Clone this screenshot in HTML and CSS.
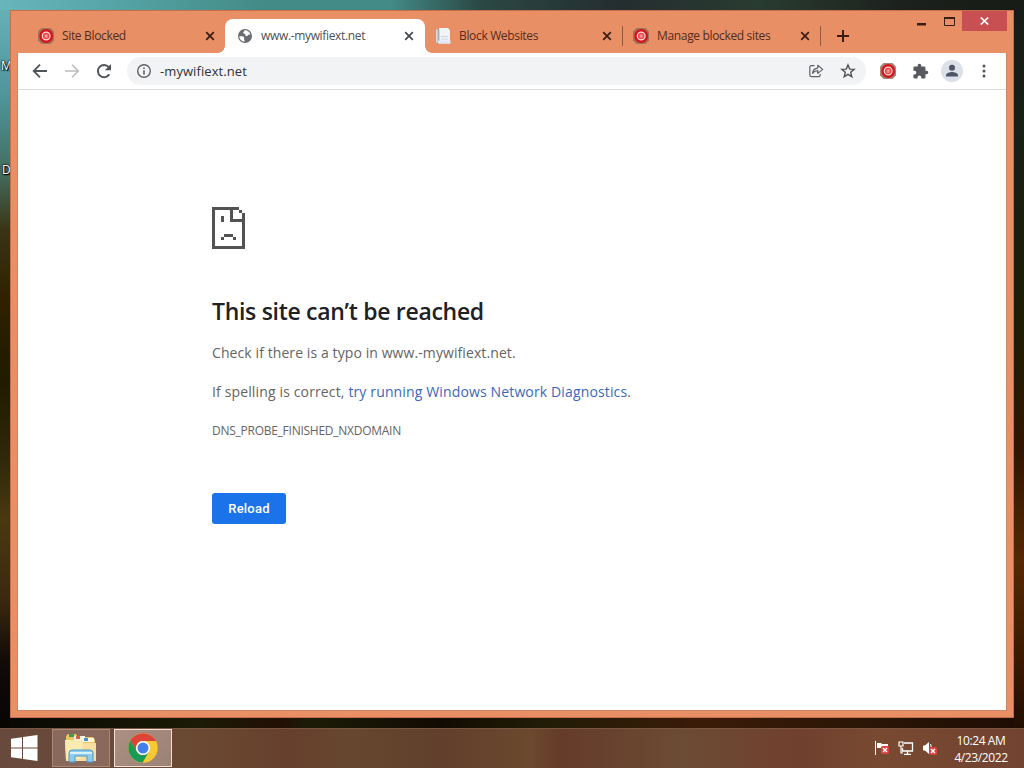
FILE: index.html
```html
<!DOCTYPE html>
<html lang="en">
<head>
    <meta charset="UTF-8">
    <meta name="viewport" content="width=device-width, initial-scale=1.0">
    <title>www.-mywifiext.net</title>
    <link rel="stylesheet" href="styles.css">
</head>
<body>
    <!-- Shared icons -->
    <svg class="defs" width="0" height="0">
        <symbol id="blocker" viewBox="0 0 16 16">
            <path d="M3.500 0h9L16 3.500v9L12.500 16h-9L0 12.500v-9z" fill="#8d6a58" opacity=".8"/>
            <circle cx="8.200" cy="8" r="6.900" fill="#d3151b"/>
            <circle cx="8.200" cy="8" r="3.900" fill="#e8484a" stroke="#ffdcd8" stroke-width="1.200"/>
            <path d="M6.700 7.200h3M6.700 9h3" stroke="#ffc9c4" stroke-width="1"/>
        </symbol>
        <symbol id="close" viewBox="0 0 10 10">
            <path d="M1.200 1.200l7.600 7.600M8.800 1.200L1.200 8.800" stroke="currentColor" stroke-width="1.700"/>
        </symbol>
        <symbol id="cross" viewBox="0 0 8 8">
            <rect width="8" height="8" rx="1.500" fill="#d8423f"/>
            <path d="M2 2l4 4M6 2L2 6" stroke="#fff" stroke-width="1.400"/>
        </symbol>
    </svg>

    <div class="desktop">
        <span class="desktop-label first">M</span>
        <span class="desktop-label second">D</span>

        <div class="window">
            <div class="tab-strip">
                <div class="tab">
                    <svg class="favicon"><use href="#blocker"/></svg>
                    <span class="tab-title">Site Blocked</span>
                    <svg class="tab-close"><use href="#close"/></svg>
                </div>
                <div class="tab active">
                    <svg class="favicon" viewBox="0 0 16 16">
                        <circle cx="8" cy="8" r="7" fill="#696d71"/>
                        <path d="M2.300 8.200c2 .1 3.700-.2 4.600.8.800.9-.5 1.500.3 2.400.5.500.6 1.200.3 2.200C4.600 13.300 2.300 11 2.300 8.200zM7.500 2.300c2.400-.2 5 1.300 5.900 4-.8.600-1.600.2-2.200.8-.7.600-1.300 1.700-2.400 1-.8-.6 0-1.500-.8-2.200-.6-.4-1.700.1-1.900-.8-.2-1 1.300-1.400 1.400-2.800z" fill="#fff"/>
                    </svg>
                    <span class="tab-title">www.-mywifiext.net</span>
                    <svg class="tab-close"><use href="#close"/></svg>
                </div>
                <div class="tab">
                    <svg class="favicon" viewBox="0 0 16 16">
                        <path d="M0 1.500h3.500v13H0z" fill="#7facc4"/>
                        <path d="M1 1.500h.8v13H1zM2.500 1.500h.6v13h-.6z" fill="#e4eef3"/>
                        <path d="M4 0h9l2 2.500v13H4z" fill="#f1f5fa"/>
                        <path d="M4 3l1-3v15.500H4zM6 8h7v1H6zM6 10.500h7v1H6z" fill="#c5d7e7"/>
                        <path d="M3 12.500h12.500v3H3z" fill="#dfe9f3"/>
                    </svg>
                    <span class="tab-title">Block Websites</span>
                    <svg class="tab-close"><use href="#close"/></svg>
                </div>
                <div class="tab divided">
                    <svg class="favicon"><use href="#blocker"/></svg>
                    <span class="tab-title">Manage blocked sites</span>
                    <svg class="tab-close"><use href="#close"/></svg>
                </div>
                <div class="new-tab">
                    <svg width="12" height="12" viewBox="0 0 12 12"><path d="M6 0v12M0 6h12" stroke="#3a1c10" stroke-width="2"/></svg>
                </div>
                <div class="window-buttons">
                    <svg class="minimize" width="9" height="3"><path d="M0 0h9v2.500H0z" fill="#3a1c10"/></svg>
                    <svg class="maximize" width="11" height="9"><path d="M.5 1h10v7.500H.5z" fill="none" stroke="#3a1c10"/><path d="M0 0h11v2H0z" fill="#3a1c10"/></svg>
                    <div class="window-close">
                        <svg width="9" height="8" viewBox="0 0 9 8"><path d="M.8.500l7.400 7M8.200.500l-7.400 7" stroke="#fff" stroke-width="1.700"/></svg>
                    </div>
                </div>
            </div>

            <div class="browser">
                <div class="toolbar">
                    <div class="tool"><svg width="16" height="16" viewBox="0 0 16 16"><path d="M15 8H2.200M8 1.700L1.700 8 8 14.300" fill="none" stroke="#505357" stroke-width="1.800"/></svg></div>
                    <div class="tool"><svg width="16" height="16" viewBox="0 0 16 16"><path d="M1 8h12.800M8 1.700L14.300 8 8 14.300" fill="none" stroke="#bbbdbf" stroke-width="1.600"/></svg></div>
                    <div class="tool"><svg width="16" height="16" viewBox="0 0 16 16"><path d="M13.300 11.200A6.100 6.100 0 1 1 12.700 4.200" fill="none" stroke="#505357" stroke-width="1.900"/><path d="M15 1v6.200H8.800z" fill="#505357"/></svg></div>
                    <div class="omnibox">
                        <svg class="info" width="16" height="16" viewBox="0 0 16 16"><circle cx="8" cy="8" r="6.300" fill="none" stroke="#5f6368" stroke-width="1.400"/><path d="M8 7.200v4.200M8 4.400v1.600" stroke="#5f6368" stroke-width="1.600"/></svg>
                        <span class="url">-mywifiext.net</span>
                        <div class="tool share"><svg width="16" height="16" viewBox="0 0 16 16"><path d="M6.500 2.700H3.400a1.600 1.600 0 0 0-1.600 1.600v7.800a1.600 1.600 0 0 0 1.600 1.600h7.200a1.600 1.600 0 0 0 1.600-1.600V11" fill="none" stroke="#5f6368" stroke-width="1.200"/><path d="M4.500 10.300c.4-3.200 2-5 5.300-5.200V2.300L14.700 6.400 9.800 10.400V7.700c-2.300 0-3.900.8-5.300 2.600z" fill="none" stroke="#5f6368" stroke-width="1.200" stroke-linejoin="round"/></svg></div>
                        <div class="tool"><svg width="16" height="16" viewBox="0 0 16 16"><path d="M8 1.900l1.700 4.200 4.500.3-3.500 2.900 1.100 4.400L8 11.300l-3.800 2.400 1.100-4.400L1.800 6.400l4.500-.3z" fill="none" stroke="#505357" stroke-width="1.400"/></svg></div>
                    </div>
                    <div class="tool extension"><svg width="16" height="16"><use href="#blocker"/></svg></div>
                    <div class="tool"><svg width="17" height="17" viewBox="0 0 24 24"><path d="M20.500 11H19V7a2 2 0 0 0-2-2h-4V3.500a2.500 2.500 0 0 0-5 0V5H4a2 2 0 0 0-2 2v3.800h1.500a2.700 2.700 0 0 1 0 5.400H2V20a2 2 0 0 0 2 2h3.800v-1.500a2.700 2.700 0 0 1 5.400 0V22H17a2 2 0 0 0 2-2v-4h1.500a2.500 2.500 0 0 0 0-5z" fill="#56595d"/></svg></div>
                    <div class="tool"><svg width="22" height="22" viewBox="0 0 22 22"><circle cx="11" cy="11" r="11" fill="#dce0e8"/><circle cx="11" cy="7.700" r="3" fill="#4d5566"/><path d="M5 16.500v-1.300C5 13 9 12 11 12s6 1 6 3.200v1.300z" fill="#4d5566"/></svg></div>
                    <div class="tool"><svg width="4" height="14" viewBox="0 0 4 14"><circle cx="2" cy="2" r="1.500" fill="#505357"/><circle cx="2" cy="7" r="1.500" fill="#505357"/><circle cx="2" cy="12" r="1.500" fill="#505357"/></svg></div>
                </div>

                <div class="page">
                    <svg class="sad-page" viewBox="0 0 11 14" shape-rendering="crispEdges">
                        <path d="M0 0h9v1h1v1h1v12H0zM1 1v12h9V5H6V1zM7 1v3h3V2H9V1zM3 3h1v2H3zM4 9h3v1H4zM3 10h1v1H3zM7 10h1v1H7z" fill="#535353" fill-rule="evenodd"/>
                    </svg>
                    <h1>This site can’t be reached</h1>
                    <p class="typo">Check if there is a typo in www.-mywifiext.net.</p>
                    <p class="suggestion">If spelling is correct, <a>try running Windows Network Diagnostics</a>.</p>
                    <p class="error-code">DNS_PROBE_FINISHED_NXDOMAIN</p>
                    <button type="button">Reload</button>
                </div>
            </div>
        </div>

        <div class="taskbar">
            <svg class="start" width="27" height="26" viewBox="0 0 27 26"><path d="M0 3.700l11-1.500v10.300H0zM12 2l14.500-2v12.500H12zM0 13.500h11v10.300L0 22.300zM12 13.500h14.500V26L12 24z" fill="#fff"/></svg>
            <div class="task">
                <svg width="34" height="32" viewBox="0 0 34 32">
                    <path d="M2 4l2-2h8l2 3h15l2 3v20H2z" fill="#e6c766"/>
                    <path d="M5 2h5v3H5z" fill="#44965a"/>
                    <path d="M10 4h11v4H10z" fill="#f8f1df"/><path d="M12 4h4v3h-4z" fill="#d76045"/>
                    <path d="M18 6h12v4H18z" fill="#fff7dd"/><path d="M20 6h4v3h-4z" fill="#4492ca"/>
                    <path d="M1 8h16l2 3h13v18H2z" fill="#f7dfa0"/>
                    <path d="M1 8h16l2 3-3 16H2z" fill="#faebb0"/>
                    <path d="M5 30V21q0-3 3-3h18q3 0 3 3v9h-6v-6H11v6z" fill="#8ecbed" stroke="#4a9ccc"/>
                    <path d="M6 20h22v2H6z" fill="#d6f3ff"/>
                </svg>
            </div>
            <div class="task current">
                <svg width="30" height="30" viewBox="0 0 30 30">
                    <circle cx="15" cy="15" r="14.700" fill="#f9c835"/>
                    <path d="M2.300 7.600A14.700 14.700 0 0 1 27.700 7.600L28 8H15a7 7 0 0 0-6.100 10.500z" fill="#dc4437"/>
                    <path d="M2.300 7.600A14.700 14.700 0 0 0 14.500 29.700L21.100 18.500A7 7 0 0 1 8.900 18.500z" fill="#189b57"/>
                    <circle cx="15" cy="15" r="7" fill="#fff"/><circle cx="15" cy="15" r="5.500" fill="#427fed"/>
                </svg>
            </div>
            <div class="tray">
                <svg width="16" height="16" viewBox="0 0 16 16"><path d="M1.500 1v14" stroke="#fff"/><path d="M3 3h4l1 1h6v5H8L7 8H3z" fill="#fff"/><use href="#cross" x="7" y="6" width="8" height="8"/></svg>
                <svg width="16" height="16" viewBox="0 0 16 16"><path d="M6 3h8.500v8H4.500V8M9.500 11v3M6 14.300h7" fill="none" stroke="#fff" stroke-width="1.300"/><path d="M1 2h4v4H1zM3 6v7h2" fill="none" stroke="#fff" stroke-width="1.200"/></svg>
                <svg width="16" height="16" viewBox="0 0 16 16"><path d="M1 5.500h2L7 2v12l-4-3.500H1z" fill="#fff"/><path d="M8.500 4q1.800 3.500 0 8" fill="none" stroke="#fff"/><use href="#cross" x="7" y="7" width="8" height="8"/></svg>
            </div>
            <div class="clock">
                <span class="time">10:24 AM</span>
                <span class="date">4/23/2022</span>
            </div>
        </div>
    </div>
</body>
</html>
```
FILE: styles.css
```css
* {
    box-sizing: border-box;
}
body {
    margin: 0;
    font-family: "Open Sans", "Noto Sans", sans-serif;
    overflow: hidden;
}
svg {
    display: block;
    flex: none;
}
.defs {
    position: absolute;
}
.desktop {
    position: relative;
    display: flex;
    flex-direction: column;
    width: 1024px;
    height: 768px;
    background:
        linear-gradient(to right, #68b5bc 0, #55a3a5 120px, #438b87 260px, #438b87 390px, #2b4844 480px, #242d2f 620px, #293c31 760px, #1c211d 900px, #171b16 1024px) top / 100% 10px no-repeat,
        linear-gradient(#68b2b8 0, #4d9499 100px, #446f60 170px, #3a3415 230px, #302000 300px, #201b00 380px, #30280a 460px, #4a3811 520px, #3b2810 600px, #120b07 660px, #080503 728px) left / 10px 100% no-repeat,
        linear-gradient(#171b18 0, #182017 130px, #1e1d03 330px, #301500 450px, #552806 560px, #3a1900 660px, #210e03 728px) right / 10px 100% no-repeat,
        linear-gradient(to right, #080703, #1b1b06 200px, #220f05 280px, #1b1c08 310px, #120b03 440px, #211c06 540px, #3a1b08 700px, #2e1706 840px, #1e0c04) bottom / 100% 50px no-repeat,
        #171b16;
}
.desktop-label {
    position: absolute;
    font-size: 12px;
    line-height: 16px;
    color: #fff;
    text-shadow: 1px 1px 1px #000, 0 0 2px #000, 0 0 2px #000;
}
.desktop-label.first {
    left: 1px;
    top: 58px;
}
.desktop-label.second {
    left: 2px;
    top: 162px;
}
.window {
    position: relative;
    display: flex;
    flex-direction: column;
    width: 1004px;
    height: 708px;
    margin: 10px 10px 10px;
    background: #e98f66;
    border: 1px solid #c66d4a;
}

/* Tabs */
.tab-strip {
    display: flex;
    height: 42px;
    flex: none;
    padding: 0 6px 0 16px;
}
.tab {
    position: relative;
    display: flex;
    align-items: center;
    width: 198px;
    height: 34px;
    margin-top: 8px;
    padding: 0 10px 0 11px;
    color: #542b1b;
}
.tab.active {
    width: 200px;
    margin-right: -1px;
    padding: 0 11px 0 12px;
    background: #fff;
    border-radius: 8px 8px 0 0;
    color: #4d5155;
}
.tab.active::before,
.tab.active::after {
    content: "";
    position: absolute;
    bottom: 0;
    width: 7px;
    height: 7px;
}
.tab.active::before {
    left: -7px;
    background: radial-gradient(circle at 0 0, transparent 6.500px, #fff 7px);
}
.tab.active::after {
    right: -7px;
    background: radial-gradient(circle at 100% 0, transparent 6.500px, #fff 7px);
}
.tab.divided::before,
.tab.divided::after {
    content: "";
    position: absolute;
    top: 7px;
    left: 0;
    width: 1px;
    height: 20px;
    background: #96583d;
}
.tab.divided::after {
    left: 198px;
}
.favicon {
    width: 16px;
    height: 16px;
}
.tab-title {
    margin-left: 8px;
    padding-bottom: 1px;
    font-size: 12px;
    letter-spacing: -0.34px;
    white-space: nowrap;
}
.tab-close {
    width: 10px;
    height: 10px;
    margin-left: auto;
    color: #3a1c10;
}
.active .tab-close {
    color: #44474b;
}
.new-tab {
    margin: 19px 0 0 17px;
}
.window-buttons {
    display: flex;
    margin-left: auto;
}
.minimize {
    margin: 12px 18px 0 0;
}
.maximize {
    margin: 6px 7px 0 0;
}
.window-close {
    display: flex;
    align-items: center;
    justify-content: center;
    width: 45px;
    height: 20px;
    background: #c95052;
}

/* Toolbar */
.browser {
    display: flex;
    flex-direction: column;
    flex: 1;
    margin: 0 6px 6px;
    border: 1px solid #cb8665;
    border-top: 0;
    background: #fff;
}
.toolbar {
    display: flex;
    align-items: center;
    height: 37px;
    flex: none;
    padding-left: 6px;
    border-bottom: 1px solid #d9dbdd;
}
.tool {
    display: flex;
    align-items: center;
    justify-content: center;
    width: 32px;
    height: 28px;
    flex: none;
}
.omnibox {
    display: flex;
    align-items: center;
    width: 739px;
    height: 28px;
    margin-left: 7px;
    padding: 0 2px 0 9px;
    border-radius: 14px;
    background: #f1f3f4;
}
.url {
    margin-left: 8px;
    font-size: 13px;
    letter-spacing: 0.08px;
    color: #303338;
}
.share {
    margin-left: auto;
}
.extension {
    margin-left: 6px;
}

/* Error page */
.page {
    padding: 117px 0 0 194px;
    color: #646464;
}
.sad-page {
    width: 33px;
    height: 42px;
}
h1 {
    margin: 47px 0 0;
    font-size: 23px;
    font-weight: 600;
    line-height: 30px;
    letter-spacing: -0.3px;
    color: #202124;
}
.page p {
    margin: 0;
    white-space: nowrap;
}
.page .typo {
    margin-top: 15px;
    font-size: 14px;
    line-height: 24px;
    letter-spacing: 0.09px;
}
.page .suggestion {
    margin-top: 15px;
    font-size: 14px;
    line-height: 24px;
    letter-spacing: 0.14px;
}
.page a {
    color: #3c66bd;
}
.page .error-code {
    margin-top: 17px;
    font-size: 12px;
    line-height: 20px;
    letter-spacing: -0.26px;
}
button {
    display: block;
    width: 74px;
    height: 31px;
    margin-top: 52px;
    padding: 0;
    border: 0;
    border-radius: 3px;
    background: #1a73e8;
    color: #fff;
    font: 500 13px Roboto, sans-serif;
    letter-spacing: 0.2px;
}

/* Taskbar */
.taskbar {
    display: flex;
    align-items: center;
    height: 40px;
    padding: 0 16px 2px 11px;
    background: linear-gradient(to right, #684a3d, #6a4936 100px, #6b4931 200px, #663f2d 290px, #67472f 350px, #613f2c 440px, #6b492e 530px, #653b2a 560px, #6c4b34 680px, #70402e 800px, #784a31 880px, #714331);
    border-top: 1px solid #795644;
}
.start {
    margin-right: 14px;
}
.task {
    display: flex;
    align-items: center;
    justify-content: center;
    width: 58px;
    height: 38px;
    margin-right: 4px;
    border: 1px solid #a98a79;
    background: #89695b;
}
.task.current {
    background: linear-gradient(135deg, #aa8f82, #9c8175);
    border-color: #efdfd7;
}
.tray {
    display: flex;
    gap: 8px;
    margin-left: auto;
}
.clock {
    display: flex;
    flex-direction: column;
    align-items: center;
    width: 54px;
    margin-left: 16px;
    padding-top: 2px;
    font-size: 12px;
    line-height: 17px;
    letter-spacing: -0.4px;
    color: #fff;
    white-space: nowrap;
}
```
